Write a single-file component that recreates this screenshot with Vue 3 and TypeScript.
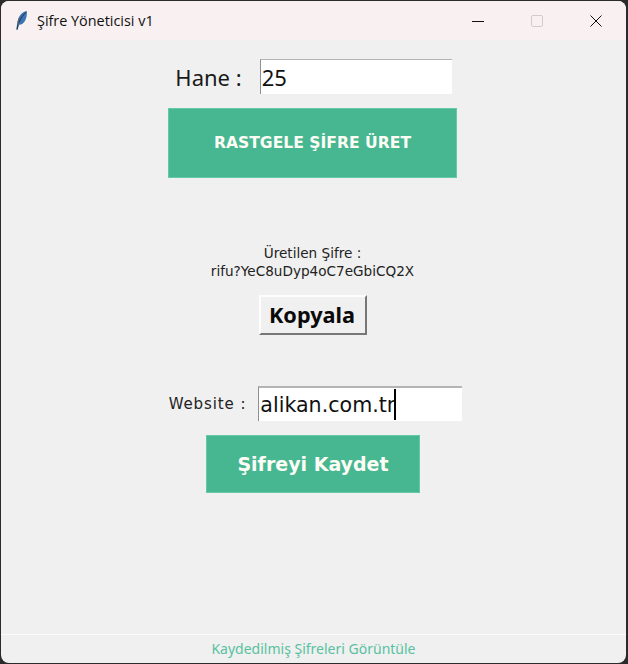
<script setup lang="ts">
const hane = '25'
const password = 'rifu?YeC8uDyp4oC7eGbiCQ2X'
const website = 'alikan.com.tr'
</script>

<template>
  <div class="desktop">
    <div class="window">
      <header class="titlebar">
        <svg class="feather" width="14" height="21" viewBox="0 0 14 21">
          <path d="M1.5 19.5 C1.8 14.5 2.6 9.5 4.6 6 C6.4 3 9.4 1.2 11.8 1 C12.2 4.5 11.4 9 9.6 11.6 C8.2 13.8 6 15 4 14.8 L2.6 19.7 Z" fill="#3a74b4" />
          <path d="M2 19.5 C3 13 5.6 7.6 10.8 2.4" fill="none" stroke="#1a3045" stroke-width="1" />
          <path d="M4.6 6 C3.2 8.4 2.4 11.6 2.2 15.6 L4 14.8 C4 11 4.2 8.4 4.6 6 Z" fill="#5a6168" />
        </svg>
        <span class="title">Şifre Yöneticisi v1</span>
        <div class="controls">
          <span class="ctl"><svg width="14" height="14" viewBox="0 0 14 14"><path d="M1 7.5 H13" stroke="#111" stroke-width="1" /></svg></span>
          <span class="ctl"><svg width="14" height="14" viewBox="0 0 14 14"><rect x="1.5" y="1.5" width="11" height="11" rx="1.5" fill="none" stroke="#cfcccc" stroke-width="1" /></svg></span>
          <span class="ctl"><svg width="14" height="14" viewBox="0 0 14 14"><path d="M1.5 1.5 L12.5 12.5 M12.5 1.5 L1.5 12.5" stroke="#111" stroke-width="1" /></svg></span>
        </div>
      </header>

      <main class="content">
        <div class="row hane-row">
          <label class="hane-label">Hane :</label>
          <div class="entry hane-entry">{{ hane }}</div>
        </div>
        <button class="generate">RASTGELE ŞİFRE ÜRET</button>

        <div class="result">
          <div>Üretilen Şifre :</div>
          <div>{{ password }}</div>
        </div>
        <button class="copy">Kopyala</button>

        <div class="row website-row">
          <label class="website-label">Website :</label>
          <div class="entry website-entry">{{ website }}<span class="caret"></span></div>
        </div>
        <button class="save">Şifreyi Kaydet</button>
      </main>

      <footer class="footer">Kaydedilmiş Şifreleri Görüntüle</footer>
    </div>
  </div>
</template>

<style>
html, body { margin: 0; padding: 0; background: #2b2b2b; }
</style>

<style scoped>
.desktop {
  width: 628px;
  height: 664px;
  background: #2b2b2b;
  padding: 1px 2px 1px 1px;
  box-sizing: border-box;
  overflow: hidden;
}
.window {
  height: 100%;
  display: flex;
  flex-direction: column;
  background: #f0f0f0;
  border-radius: 8px;
  overflow: hidden;
}
.titlebar {
  height: 39px;
  flex: none;
  display: flex;
  align-items: center;
  background: #f8f0f1;
  padding-left: 14px;
  padding-right: 1px;
}
.feather { flex: none; }
.title {
  margin-left: 8px;
  font: 14.4px "Open Sans", "Noto Sans", sans-serif;
  color: #111;
}
.controls {
  margin-left: auto;
  display: flex;
}
.ctl {
  width: 59px;
  height: 39px;
  display: flex;
  align-items: center;
  justify-content: center;
}
.content {
  flex: 1;
  display: flex;
  flex-direction: column;
  align-items: center;
  min-height: 0;
  padding-right: 2px;
}
.row {
  display: flex;
  align-items: center;
}
.hane-row { margin-top: 19px; margin-left: 2px; }
.hane-label {
  font: 22px "Noto Sans", sans-serif;
  color: #1a1a1a;
  margin-right: 18px;
}
.entry {
  background: #fff;
  box-sizing: border-box;
  border-top: 1px solid #b4b4b4;
  border-left: 1px solid #8f8f8f;
  color: #111;
  display: flex;
  align-items: center;
  white-space: nowrap;
}
.hane-entry {
  width: 192px;
  height: 35px;
  padding-left: 1px;
  font: 22px "Noto Sans", sans-serif;
}
.generate, .save {
  background: #47b792;
  color: #fdfdf6;
  border: 1px solid #66c9a6;
  box-sizing: border-box;
  font-family: "DejaVu Sans", sans-serif;
  font-weight: 700;
  padding: 0;
}
.generate {
  width: 289px;
  height: 70px;
  margin-top: 14px;
  font-size: 15.6px;
}
.result {
  margin-top: 66px;
  text-align: center;
  font: 13.6px/18px "DejaVu Sans", sans-serif;
  color: #222;
}
.copy {
  width: 108px;
  height: 40px;
  margin-top: 15px;
  margin-left: 1px;
  background: #f0f0f0;
  box-sizing: border-box;
  border: 2px solid;
  border-color: #fdfdfd #777 #777 #fdfdfd;
  font: 700 21.7px "Noto Sans", sans-serif;
  color: #0a0a0a;
  padding: 0 2px 2px 0;
}
.website-row { margin-top: 51px; margin-left: 6px; }
.website-label {
  font: 15px "DejaVu Sans", sans-serif;
  letter-spacing: 0.9px;
  color: #222;
  margin-right: 12px;
  white-space: pre;
}
.website-entry {
  width: 204px;
  height: 35px;
  padding-left: 1px;
  font: 20.6px "DejaVu Sans", sans-serif;
  border-top-width: 2px;
}
.caret {
  display: inline-block;
  width: 2px;
  height: 31px;
  background: #000;
  margin-left: -1px;
}
.save {
  width: 214px;
  height: 58px;
  margin-top: 14px;
  margin-left: 1px;
  font-size: 19px;
}
.footer {
  flex: none;
  height: 29px;
  box-sizing: border-box;
  border-top: 1px solid #fcfcfc;
  padding-bottom: 2px;
  display: flex;
  align-items: center;
  justify-content: center;
  font: 14px "Noto Sans", sans-serif;
  color: #58c1a0;
}
</style>
